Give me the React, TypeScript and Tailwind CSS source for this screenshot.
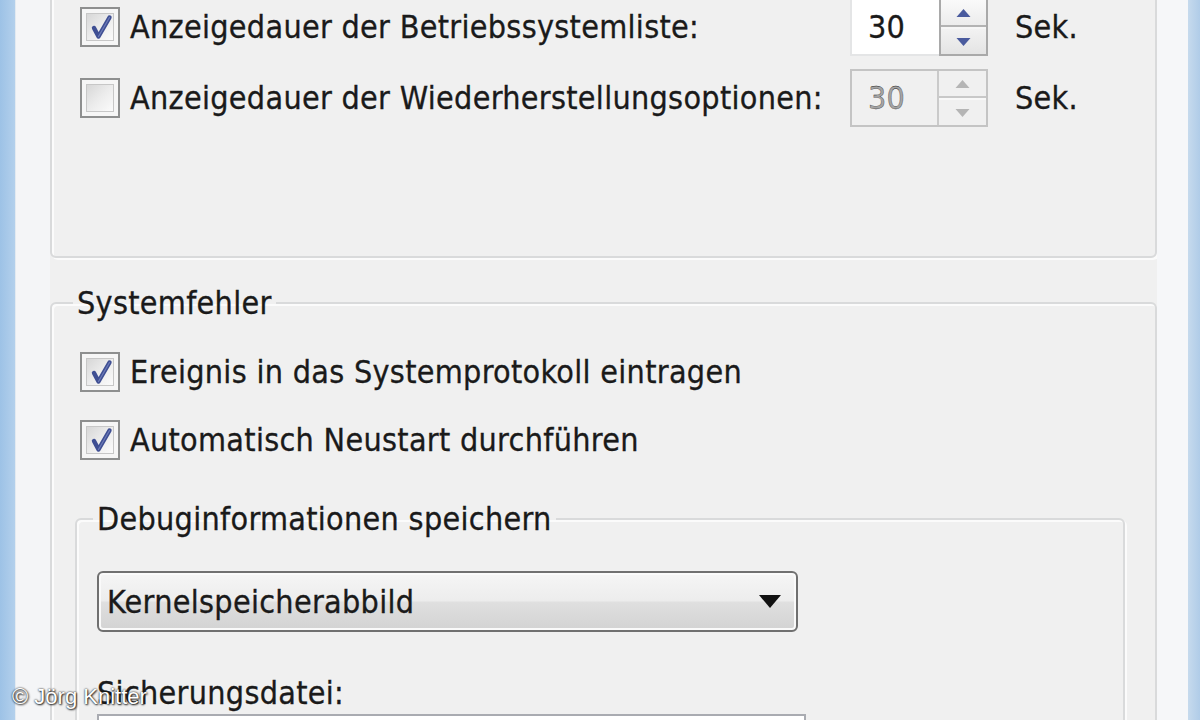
import clsx from 'clsx'

const uiFont = "font-['DejaVu_Sans_Condensed','DejaVu_Sans',sans-serif] [font-stretch:condensed]"

function CheckBox({ checked = false }: { checked?: boolean }) {
  return (
    <span className="flex h-[40px] w-[40px] shrink-0 border-2 border-[#8e8f8f] bg-[#f6f6f6] p-[4px]">
      <span className="relative flex h-full w-full border border-[#c7c7c7] bg-gradient-to-br from-[#d7d7d7] via-[#ececec] to-[#fbfbfb]">
        {checked && (
          <svg viewBox="0 0 30 30" className="absolute -left-[1px] -top-[1px] h-[30px] w-[30px]">
            <path d="M8 15 L12.5 23.5 L23.5 4.5" fill="none" stroke="#3f4f93" strokeWidth="4.4" strokeLinecap="round" strokeLinejoin="round" />
            <path d="M12.5 23.5 L23.5 4.5" fill="none" stroke="#6d7bb8" strokeWidth="1.2" strokeLinecap="round" />
          </svg>
        )}
      </span>
    </span>
  )
}

function Arrow({ up, disabled }: { up?: boolean; disabled?: boolean }) {
  return (
    <svg viewBox="0 0 14 8" className="h-[8px] w-[15px]">
      <path d={up ? 'M0 8 L7 0 L14 8 Z' : 'M0 0 L14 0 L7 8 Z'} fill={disabled ? '#b5b5b5' : '#4a5b9e'} />
    </svg>
  )
}

function Spinner({ disabled = false }: { disabled?: boolean }) {
  return (
    <div
      className={clsx(
        'flex h-[58px] w-[138px] shrink-0 border-2',
        disabled ? 'border-[#c4c4c4] bg-[#f0f0f0]' : 'border-[#e4e5e6] bg-white'
      )}
    >
      <span className={clsx('flex-1 pl-[16px] leading-[54px]', disabled ? 'text-[#a4a4a4]' : 'text-[#1a1a1a]')}>30</span>
      <div
        className={clsx(
          'flex w-[49px] flex-col',
          disabled ? 'border-l-2 border-[#cacaca]' : '-my-[2px] -mr-[2px] border-2 border-[#a9a9a9]'
        )}
      >
        <div
          className={clsx(
            'flex flex-1 items-center justify-center border-b-2',
            disabled ? 'border-[#c8c8c8]' : 'border-[#b3b3b3] bg-gradient-to-b from-[#fafafa] to-[#ececec]'
          )}
        >
          <Arrow up disabled={disabled} />
        </div>
        <div
          className={clsx(
            'flex flex-1 items-center justify-center border-t-2',
            disabled ? 'border-[#f8f8f8]' : 'border-[#f6f6f6] bg-gradient-to-b from-[#f2f2f2] to-[#e4e4e4]'
          )}
        >
          <Arrow disabled={disabled} />
        </div>
      </div>
    </div>
  )
}

function TimeoutRow({ label, checked, disabled }: { label: string; checked?: boolean; disabled?: boolean }) {
  return (
    <div className="flex h-[58px] items-center">
      <CheckBox checked={checked} />
      <span className="ml-[10px] w-[720px] shrink-0">{label}</span>
      <Spinner disabled={disabled} />
      <span className="ml-[27px]">Sek.</span>
    </div>
  )
}

function CheckRow({ label }: { label: string }) {
  return (
    <div className="flex h-[48px] items-center gap-[10px]">
      <CheckBox checked />
      <span>{label}</span>
    </div>
  )
}

const groupBox = 'rounded-[6px] border-2 border-[#d9dadb] shadow-[inset_2px_2px_0_#fbfbfb,2px_2px_0_#fbfbfb]'

export default function App() {
  return (
    <div
      className={clsx(
        'relative flex h-[720px] w-[1200px] overflow-hidden bg-[#f5f6f8] text-[32px] leading-[40px] tracking-[0.3px] text-[#1a1a1a] [-webkit-text-stroke:0.3px_#1a1a1a]',
        uiFont
      )}
    >
      <div className="w-[15px] shrink-0 bg-gradient-to-r from-[#9dc2e6] to-[#b3d0ec]" />
      <div className="w-[35px] shrink-0 border-l border-[#e3eaf1] bg-[#f4f5f7]" />

      <main className="flex w-[1107px] shrink-0 flex-col bg-[#f0f0f0]">
        {/* Systemstart group, top edge cut off */}
        <div className={clsx('-mt-[24px] flex flex-col gap-[13px] pb-[129px] pl-[28px] pt-[20px]', groupBox)}>
          <TimeoutRow label="Anzeigedauer der Betriebssystemliste:" checked />
          <TimeoutRow label="Anzeigedauer der Wiederherstellungsoptionen:" disabled />
        </div>

        <fieldset className={clsx('mt-[25px] min-w-0 px-[28px] pb-[80px] pt-[25px]', groupBox)}>
          <legend className="-ml-[7px] px-[4px] leading-[40px]">Systemfehler</legend>
          <div className="flex flex-col gap-[20px]">
            <CheckRow label="Ereignis in das Systemprotokoll eintragen" />
            <CheckRow label="Automatisch Neustart durchführen" />
          </div>

          <fieldset className={clsx('-ml-[5px] mr-[2px] mt-[35px] min-w-0 pb-[60px] pl-[20px] pt-[32px]', groupBox)}>
            <legend className="-ml-[4px] px-[4px] leading-[40px]">Debuginformationen speichern</legend>
            <div className="flex h-[61px] w-[701px] items-center justify-between rounded-[6px] border-2 border-[#707070] bg-[linear-gradient(to_bottom,#f5f5f5_0%,#ededed_48%,#dfdfdf_52%,#d3d3d3_100%)] pl-[8px] pr-[15px] shadow-[inset_0_0_0_2px_#fafafa]">
              <span>Kernelspeicherabbild</span>
              <svg viewBox="0 0 22 13" className="h-[13px] w-[22px]">
                <path d="M0 0 L22 0 L11 13 Z" fill="#111" />
              </svg>
            </div>
            <div className="mt-[41px]">Sicherungsdatei:</div>
            <div className="mt-[1px] h-[44px] w-[709px] border-2 border-[#a9abb1] bg-white" />
          </fieldset>
        </fieldset>
      </main>

      <div className="flex-1 bg-[#f6f7f9]" />
      <div className="w-[12px] shrink-0 bg-gradient-to-r from-[#c6daed] to-[#b0cce8]" />

      <div className="absolute left-[12px] top-[682px] font-['Liberation_Sans',Arial,sans-serif] text-[22px] leading-[30px] tracking-normal text-white [-webkit-text-stroke:0] [text-shadow:0_0_2px_#000,1px_1px_2px_#333]">
        © Jörg Knitter
      </div>
    </div>
  )
}
